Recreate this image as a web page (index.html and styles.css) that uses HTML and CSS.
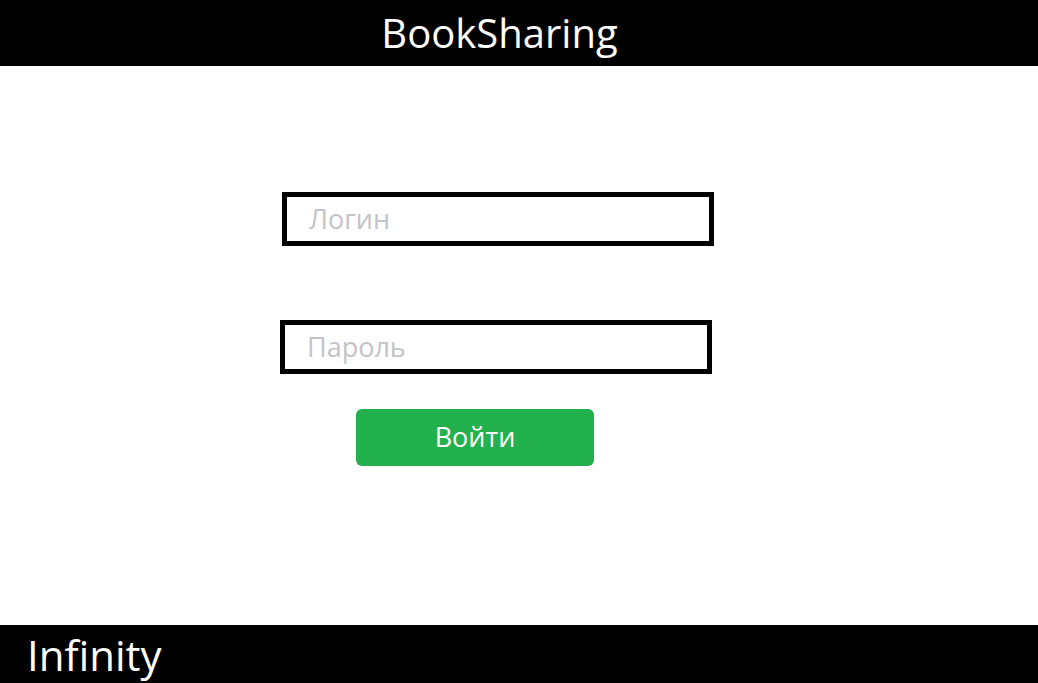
FILE: index.html
```html
<!DOCTYPE html>
<html lang="ru">
<head>
<meta charset="utf-8">
<title>BookSharing</title>
<link rel="stylesheet" href="styles.css">
</head>
<body>
<div class="page">
  <header class="topbar">
    <h1 class="brand">BookSharing</h1>
  </header>
  <main class="main">
    <form class="login-form">
      <input class="field field-login" type="text" placeholder="Логин">
      <input class="field field-pass" type="password" placeholder="Пароль">
      <button class="submit" type="button">Войти</button>
    </form>
  </main>
  <footer class="bottombar">
    <span class="team">Infinity</span>
  </footer>
</div>
</body>
</html>
```
FILE: styles.css
```css
* { box-sizing: border-box; }
html, body { margin: 0; padding: 0; background: #fff; }
body { font-family: "Open Sans", "Noto Sans", sans-serif; }
.page { display: flex; flex-direction: column; height: 683px; width: 1038px; }
.topbar {
  height: 66px;
  background: #000;
  display: flex;
  justify-content: center;
  padding-right: 39px;
}
.brand {
  margin: 0;
  padding-top: 6px;
  font-weight: 400;
  font-size: 40px;
  line-height: 54px;
  color: #fff;
}
.main { flex: 1; }
.login-form {
  display: flex;
  flex-direction: column;
  align-items: flex-start;
  padding: 126px 0 0 280px;
}
.field {
  width: 432px;
  height: 54px;
  border: 5px solid #000;
  border-radius: 0;
  padding: 0 0 1px 22px;
  font-family: "Open Sans", "Noto Sans", sans-serif;
  font-size: 27px;
  color: #333;
  outline: none;
  background: #fff;
}
.field::placeholder { color: #c3c3c8; opacity: 1; }
.field-login { margin-left: 2px; }
.field-pass { margin-top: 74px; }
.submit {
  margin-top: 35px;
  margin-left: 76px;
  width: 238px;
  height: 57px;
  border: none;
  border-radius: 6px;
  background: #22b14c;
  color: #fff;
  font-family: "Open Sans", "Noto Sans", sans-serif;
  font-size: 27px;
  padding: 0 0 2px 0;
}
.bottombar {
  height: 58px;
  background: #000;
  display: flex;
  align-items: center;
  padding-left: 27px;
}
.team {
  color: #fff;
  font-size: 42px;
  line-height: 54px;
  padding-top: 2px;
}
```
